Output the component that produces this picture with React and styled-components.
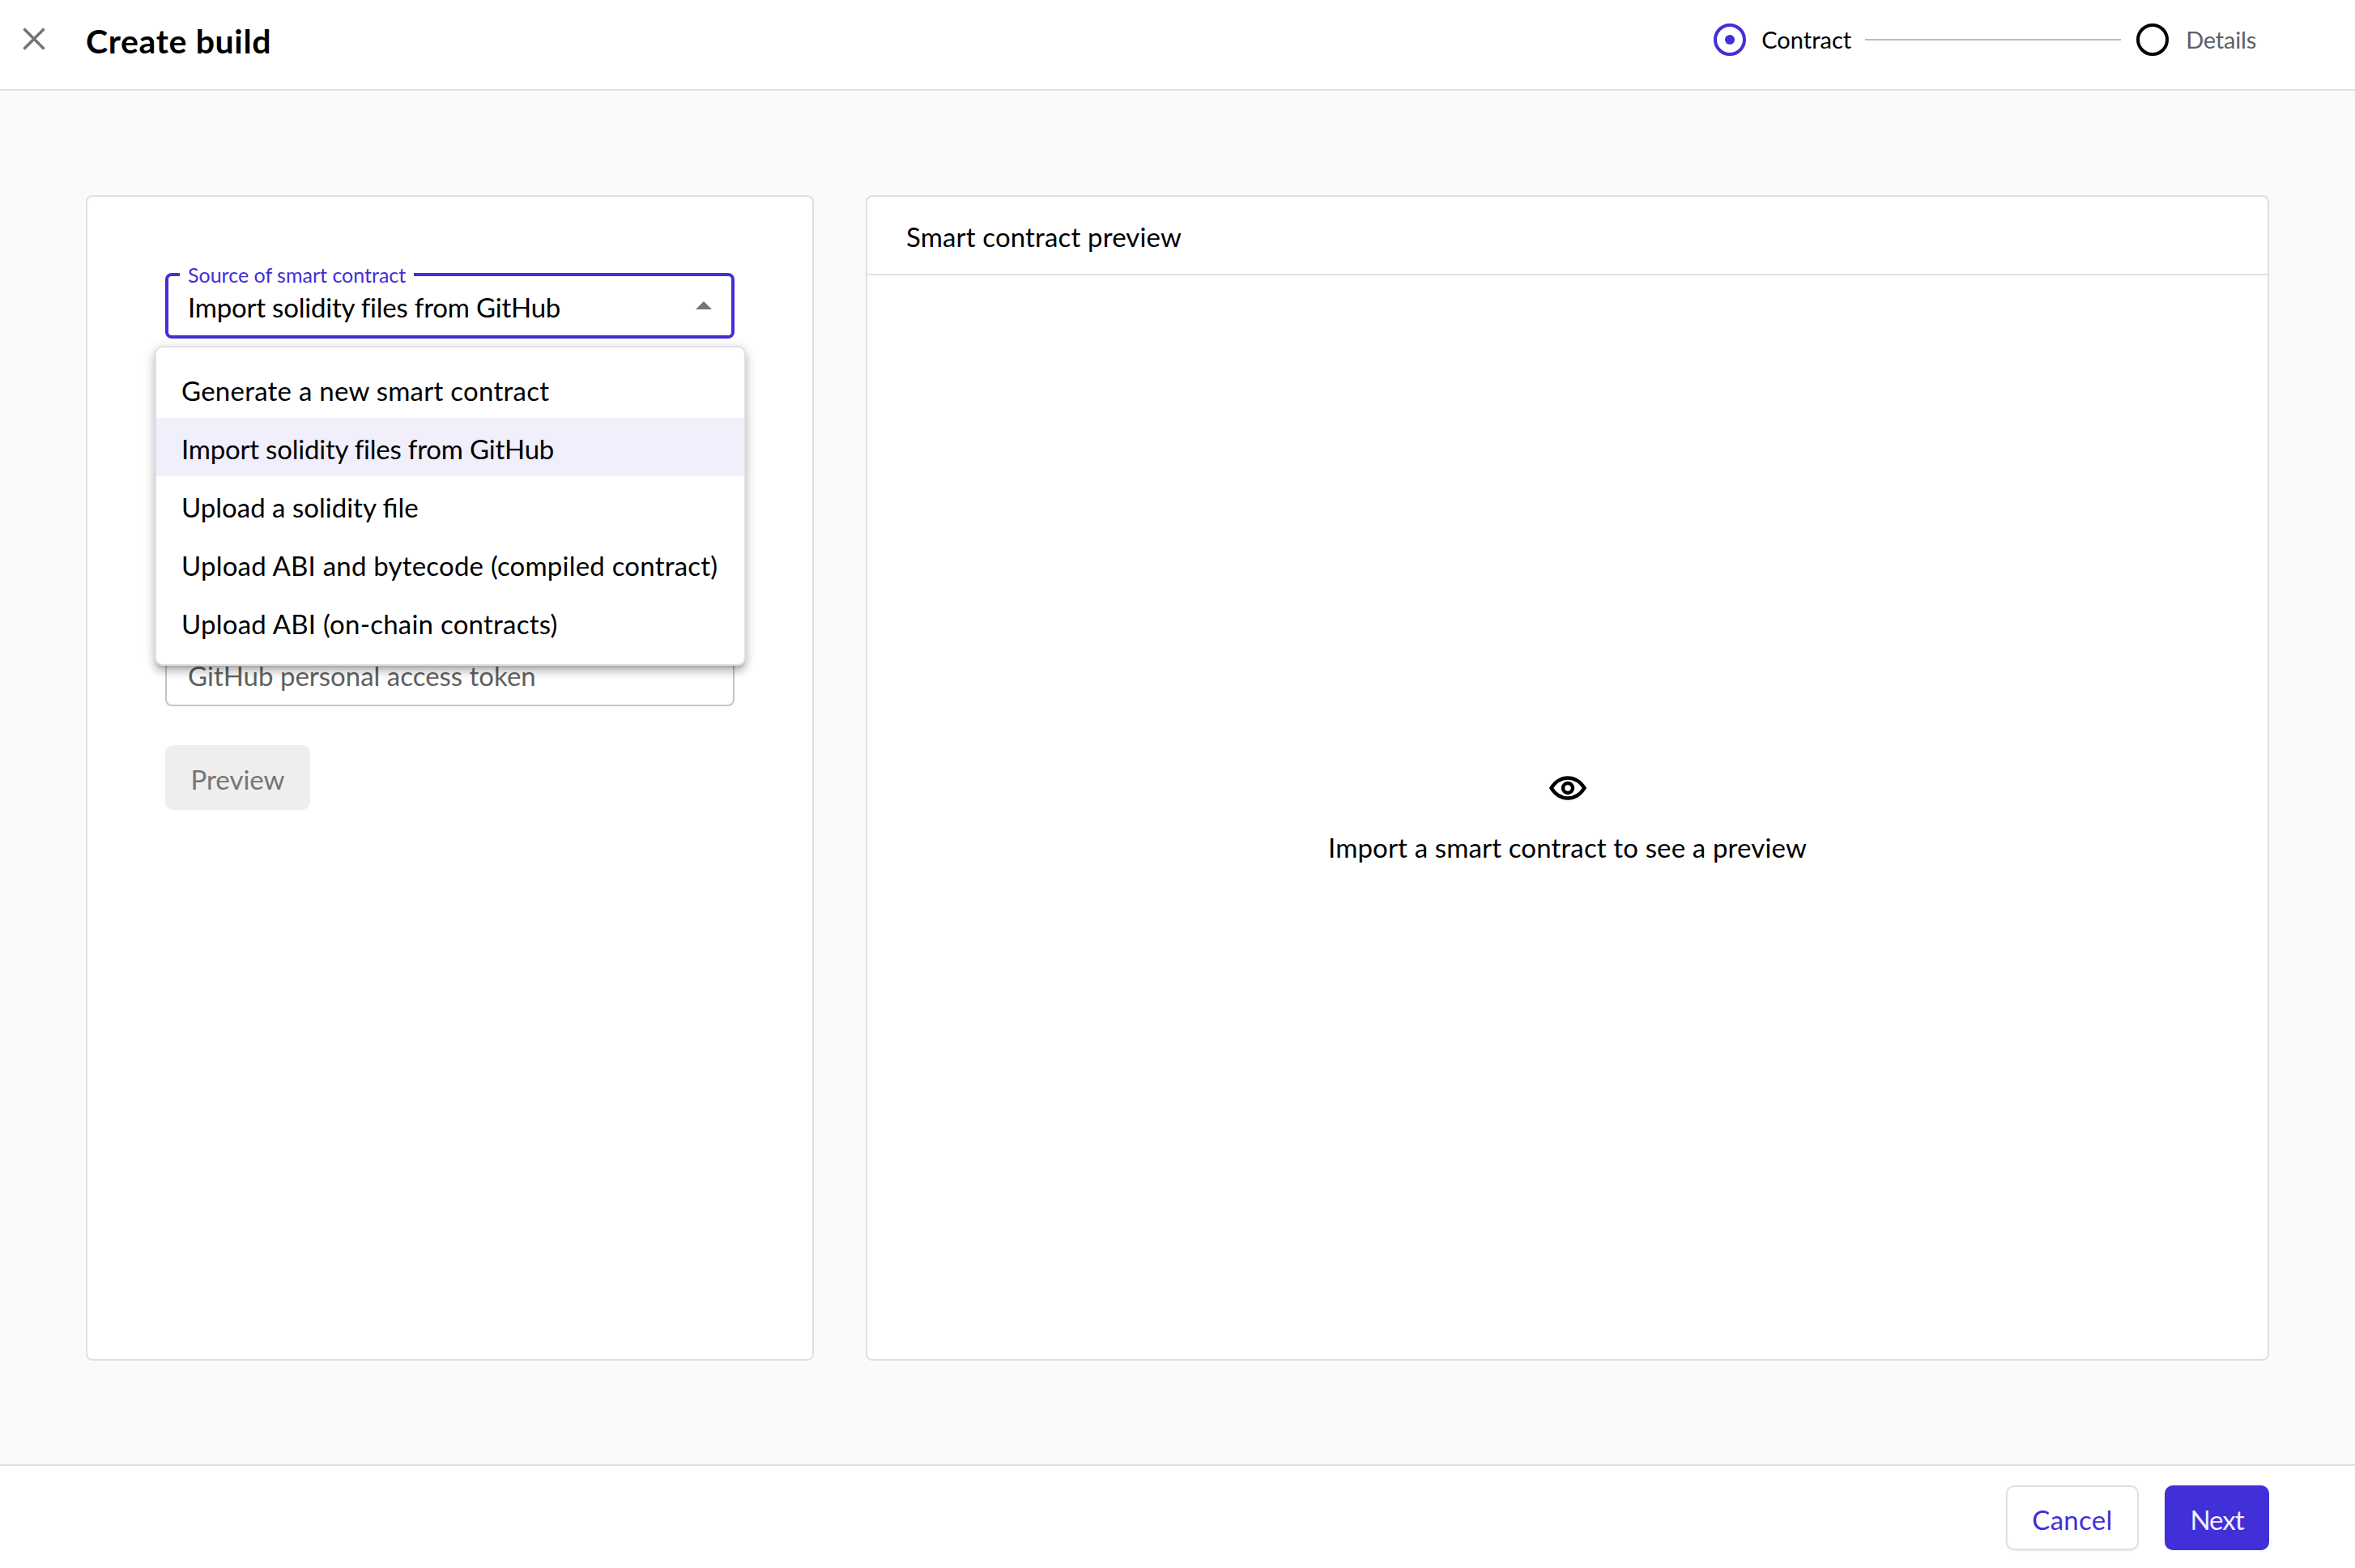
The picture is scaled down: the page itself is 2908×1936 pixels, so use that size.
import React from "react";
import styled, { createGlobalStyle } from "styled-components";

const colors = {
  primary: "#412fd8",
  border: "#e0e0e0",
  grey: "#757575",
  muted: "#616161",
  page: "#fafafa",
};

const GlobalStyle = createGlobalStyle`
  html, body {
    margin: 0;
    padding: 0;
    height: 100%;
  }
  body {
    font-family: Lato, "Open Sans", sans-serif;
    color: #000;
    background: ${colors.page};
  }
  * {
    box-sizing: border-box;
  }
`;

const Page = styled.div`
  height: 100vh;
  display: flex;
  flex-direction: column;
`;

// Top bar
const Header = styled.header`
  height: 112px;
  flex: none;
  display: flex;
  align-items: center;
  padding: 0 122px 12px 28px;
  background: #fff;
  border-bottom: 2px solid ${colors.border};
`;

const CloseButton = styled.button`
  width: 28px;
  height: 28px;
  padding: 0;
  margin: -2px 51px 0 0;
  border: 0;
  background: none;
  display: block;
  color: ${colors.grey};
`;

const Title = styled.h1`
  margin: 4px 0 0 -1px;
  font-size: 41px;
  line-height: 48px;
  font-weight: 700;
  letter-spacing: 0.65px;
`;

const Stepper = styled.ol`
  list-style: none;
  display: flex;
  align-items: center;
  margin: 0 0 0 auto;
  padding: 0;
`;

const Step = styled.li`
  display: flex;
  align-items: center;
`;

const StepDot = styled.span`
  width: 40px;
  height: 40px;
  border-radius: 50%;
  border: 4px solid ${(props) => (props.$active ? colors.primary : "#000")};
  display: flex;
  align-items: center;
  justify-content: center;
  &::after {
    content: "";
    display: ${(props) => (props.$active ? "block" : "none")};
    width: 12px;
    height: 12px;
    border-radius: 50%;
    background: ${colors.primary};
  }
`;

const StepLabel = styled.span`
  margin-left: ${(props) => (props.$active ? "19px" : "21px")};
  font-size: 29px;
  line-height: 34px;
  letter-spacing: ${(props) => (props.$active ? "0" : "-0.2px")};
  color: ${(props) => (props.$active ? "#000" : colors.muted)};
`;

const StepLine = styled.span`
  width: 316px;
  height: 2px;
  margin: 0 19px 0 17px;
  background: #bdbdbd;
`;

// Main area
const Main = styled.main`
  flex: 1;
  min-height: 0;
  display: flex;
  gap: 64px;
  padding: 129px 106px 128px;
`;

const Panel = styled.section`
  background: #fff;
  border: 2px solid ${colors.border};
  border-radius: 8px;
`;

const FormPanel = styled(Panel)`
  width: 899px;
  flex: none;
  padding: 94px 96px;
`;

const SelectWrap = styled.div`
  position: relative;
`;

const SelectBox = styled.div`
  height: 81px;
  border: 4px solid ${colors.primary};
  border-radius: 8px;
  display: flex;
  align-items: center;
  justify-content: space-between;
  padding: 2px 24px 0 24px;
  font-size: 33px;
  line-height: 40px;
  letter-spacing: -0.22px;
`;

const FloatingLabel = styled.label`
  position: absolute;
  left: 18px;
  top: -12px;
  padding: 0 10px;
  background: #fff;
  color: ${colors.primary};
  font-size: 25px;
  line-height: 28px;
`;

const Caret = styled.svg`
  width: 20px;
  height: 10px;
  margin-top: -4px;
  fill: ${colors.grey};
`;

const Menu = styled.ul`
  position: absolute;
  left: -13px;
  top: 90px;
  width: 730px;
  height: 395px;
  margin: 0;
  padding: 15px 0;
  list-style: none;
  background: #fff;
  border: 2px solid ${colors.border};
  border-radius: 10px;
  box-shadow: 0 5px 5px -3px rgba(0, 0, 0, 0.2), 0 8px 10px 1px rgba(0, 0, 0, 0.14),
    0 3px 14px 2px rgba(0, 0, 0, 0.12);
  z-index: 2;
`;

const MenuItem = styled.li`
  height: 72px;
  display: flex;
  align-items: center;
  padding: 4px 31px 0;
  font-size: 33px;
  white-space: nowrap;
  letter-spacing: ${(props) => props.$tracking}px;
  background: ${(props) => (props.$selected ? "#f0effb" : "transparent")};
`;

const TokenInput = styled.div`
  height: 81px;
  margin-top: 373px;
  border: 2px solid #c4c4c4;
  border-radius: 8px;
  display: flex;
  align-items: center;
  padding: 4px 26px 0;
  font-size: 33px;
  color: ${colors.muted};
`;

const Button = styled.button`
  height: 80px;
  padding: 3px 0 0;
  border-radius: 10px;
  font-family: inherit;
  font-size: 33px;
  display: flex;
  align-items: center;
  justify-content: center;
`;

const PreviewButton = styled(Button)`
  width: 179px;
  margin-top: 48px;
  border: 0;
  background: #eee;
  color: ${colors.grey};
`;

const PreviewPanel = styled(Panel)`
  flex: 1;
  display: flex;
  flex-direction: column;
`;

const PreviewHeader = styled.h2`
  height: 97px;
  flex: none;
  margin: 0;
  padding: 2px 48px 0;
  display: flex;
  align-items: center;
  border-bottom: 2px solid ${colors.border};
  font-size: 33px;
  font-weight: 400;
  letter-spacing: 0.15px;
`;

const PreviewBody = styled.div`
  flex: 1;
  display: flex;
  flex-direction: column;
  align-items: center;
  padding-top: 618px;
`;

const EyeIcon = styled.svg`
  width: 46px;
  height: 30px;
  display: block;
`;

const EmptyText = styled.p`
  margin: 34px 0 0;
  font-size: 33px;
  line-height: 48px;
  letter-spacing: 0.14px;
`;

// Bottom bar
const Footer = styled.footer`
  height: 128px;
  flex: none;
  display: flex;
  justify-content: flex-end;
  gap: 32px;
  padding: 24px 106px 0 0;
  background: #fff;
  border-top: 2px solid ${colors.border};
`;

const CancelButton = styled(Button)`
  width: 164px;
  background: #fff;
  color: ${colors.primary};
  border: 2px solid ${colors.border};
  box-shadow: 0 1px 3px rgba(0, 0, 0, 0.08);
  letter-spacing: 0.3px;
`;

const NextButton = styled(Button)`
  width: 129px;
  background: ${colors.primary};
  color: #f0effb;
  border: 0;
  letter-spacing: -1px;
`;

const sources = [
  { label: "Generate a new smart contract", tracking: 0.25 },
  { label: "Import solidity files from GitHub", tracking: -0.22 },
  { label: "Upload a solidity file", tracking: 0 },
  { label: "Upload ABI and bytecode (compiled contract)", tracking: 0.21 },
  { label: "Upload ABI (on-chain contracts)", tracking: 0.24 },
];

export default function App() {
  return (
    <Page>
      <GlobalStyle />
      <Header>
        <CloseButton aria-label="Close">
          <svg width="28" height="28" viewBox="0 0 28 28" fill="none" stroke="currentColor" strokeWidth="3.6">
            <path d="M1.5 1.5 26.5 26.5M26.5 1.5 1.5 26.5" />
          </svg>
        </CloseButton>
        <Title>Create build</Title>
        <Stepper>
          <Step>
            <StepDot $active />
            <StepLabel $active>Contract</StepLabel>
          </Step>
          <StepLine />
          <Step>
            <StepDot />
            <StepLabel>Details</StepLabel>
          </Step>
        </Stepper>
      </Header>
      <Main>
        <FormPanel>
          <SelectWrap>
            <FloatingLabel>Source of smart contract</FloatingLabel>
            <SelectBox>
              Import solidity files from GitHub
              <Caret viewBox="0 0 20 10">
                <path d="M10 0 20 10H0Z" />
              </Caret>
            </SelectBox>
            <Menu>
              {sources.map((source, i) => (
                <MenuItem key={source.label} $selected={i === 1} $tracking={source.tracking}>
                  {source.label}
                </MenuItem>
              ))}
            </Menu>
          </SelectWrap>
          <TokenInput>GitHub personal access token</TokenInput>
          <PreviewButton disabled>Preview</PreviewButton>
        </FormPanel>
        <PreviewPanel>
          <PreviewHeader>Smart contract preview</PreviewHeader>
          <PreviewBody>
            <EyeIcon viewBox="0 0 46 30" fill="none" stroke="#000" strokeWidth="4.4">
              <path d="M2.5 15C8 6.5 15 2.5 23 2.5S38 6.5 43.5 15C38 23.5 31 27.5 23 27.5S8 23.5 2.5 15Z" />
              <circle cx="23" cy="15" r="6" />
            </EyeIcon>
            <EmptyText>Import a smart contract to see a preview</EmptyText>
          </PreviewBody>
        </PreviewPanel>
      </Main>
      <Footer>
        <CancelButton>Cancel</CancelButton>
        <NextButton>Next</NextButton>
      </Footer>
    </Page>
  );
}
